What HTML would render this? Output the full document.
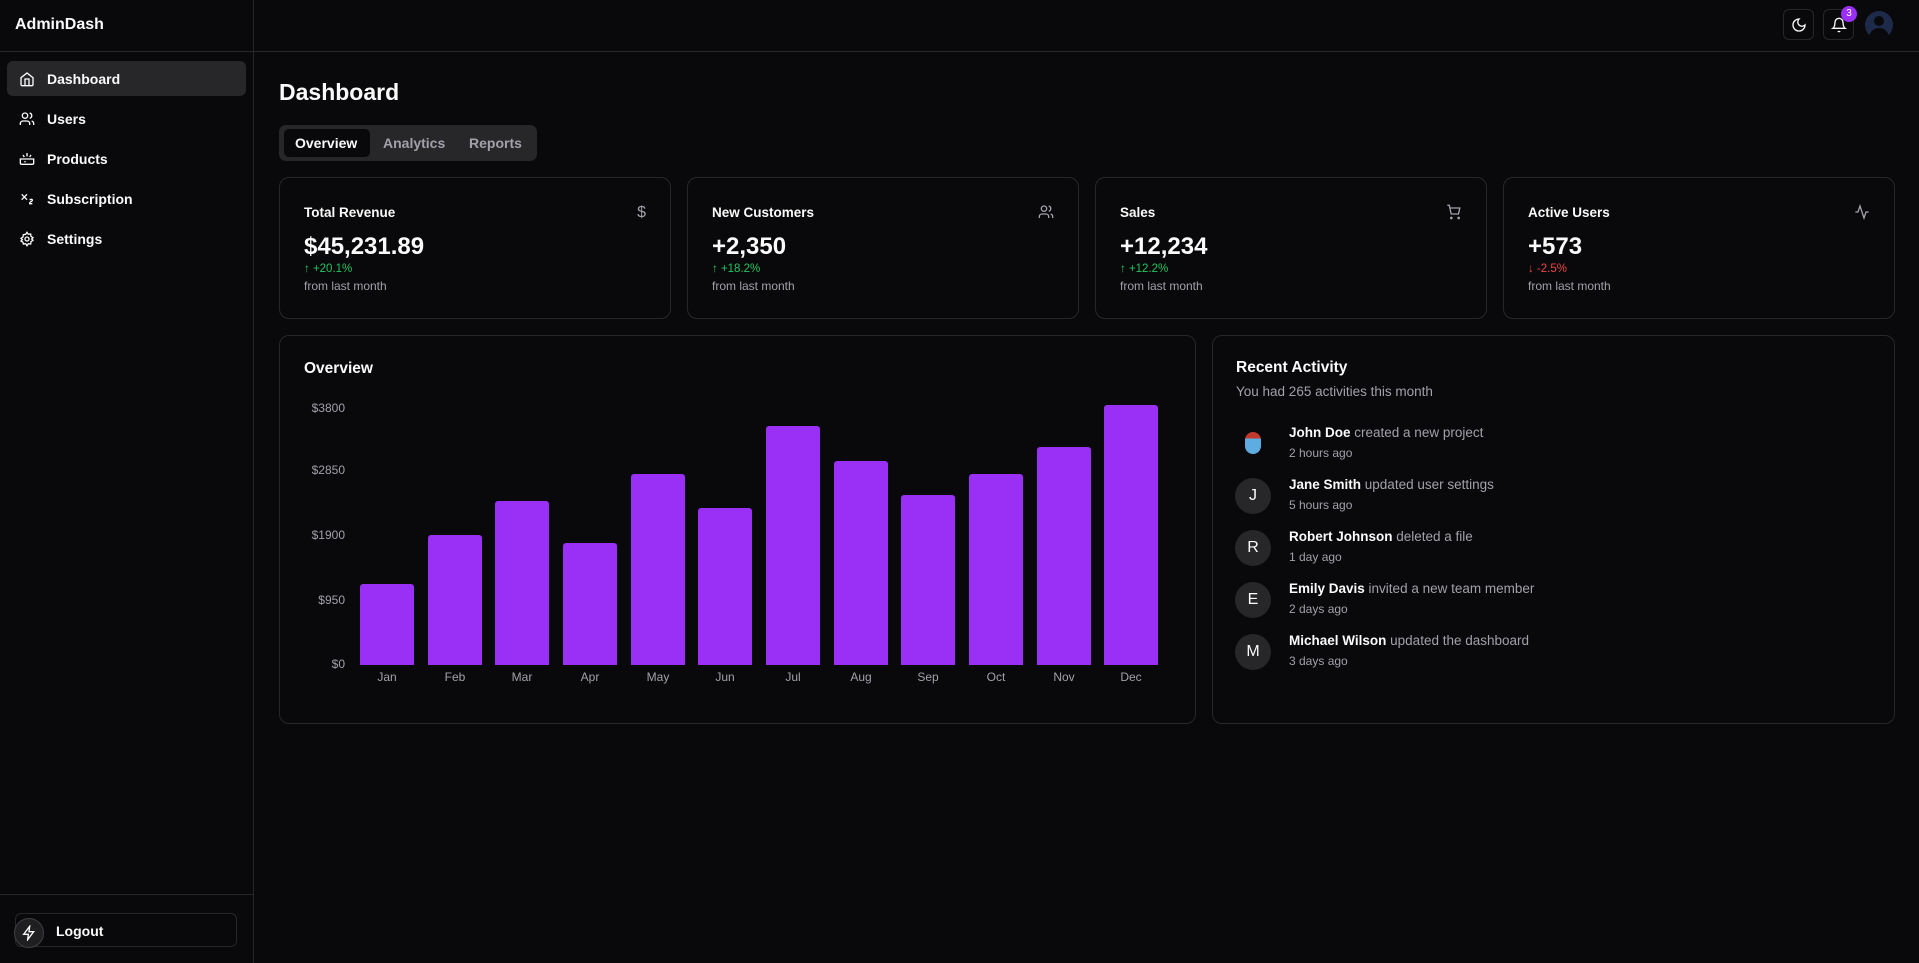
<!DOCTYPE html>
<html><head><meta charset="utf-8"><style>
*{box-sizing:border-box;margin:0;padding:0}
body{width:1919px;height:963px;background:#09090b;color:#fafafa;font-family:"Liberation Sans",sans-serif;position:relative;overflow:hidden}
.abs{position:absolute}
.side{left:0;top:0;width:254px;height:963px;border-right:1px solid #27272a}
.hdr{left:254px;top:0;right:0;height:52px;border-bottom:1px solid #27272a}
.sideh{left:0;top:51px;width:254px;height:1px;background:#27272a}
.nav{position:absolute;left:7px;width:239px;height:35px;border-radius:6px;font-size:14px;font-weight:bold;display:flex;align-items:center;padding-left:40px}
.nav svg{position:absolute;left:12px;top:10px}
.card{position:absolute;border:1px solid #27272a;border-radius:10px;background:#09090b}
.ct{position:absolute;left:24px;top:27px;font-size:13.5px;font-weight:bold}
.cv{position:absolute;left:24px;top:55px;font-size:24px;font-weight:bold}
.cc{position:absolute;left:24px;top:85px;font-size:11.5px}
.cf{position:absolute;left:24px;top:101px;font-size:12px;color:#a1a1aa}
.ci{position:absolute;right:24px;top:26px}
.bar{position:absolute;width:54px;background:#9a2ff5;border-radius:3px 3px 0 0;bottom:298px}
.yl{position:absolute;right:1574px;font-size:12px;color:#a1a1aa;text-align:right}
.ml{position:absolute;top:670px;width:54px;text-align:center;font-size:12px;color:#a1a1aa}
.av{position:absolute;left:1235px;width:36px;height:36px;border-radius:50%;background:#27272a;display:flex;align-items:center;justify-content:center;font-size:16px}
.at{position:absolute;left:1289px;font-size:13.5px;color:#a1a1aa}
.at b{color:#fafafa}
.as{position:absolute;left:1289px;font-size:12px;color:#a1a1aa}
</style></head><body>
<div class="abs side"></div>
<div class="abs hdr"></div>
<div class="abs sideh"></div>
<div class="abs" style="left:15px;top:16px;font-size:16px;font-weight:bold">AdminDash</div>
<div class="nav" style="top:61px;background:#27272a"><svg width="16" height="16" viewBox="0 0 24 24" fill="none" stroke="#fafafa" stroke-width="2"><path d="M3 10l9-7 9 7v10a2 2 0 0 1-2 2H5a2 2 0 0 1-2-2z"/><path d="M9 22V12h6v10"/></svg>Dashboard</div>
<div class="nav" style="top:101px"><svg width="16" height="16" viewBox="0 0 24 24" fill="none" stroke="#fafafa" stroke-width="2"><circle cx="9" cy="7" r="4"/><path d="M2 21v-2a4 4 0 0 1 4-4h6a4 4 0 0 1 4 4v2M16 3.1a4 4 0 0 1 0 7.8M22 21v-2a4 4 0 0 0-3-3.9"/></svg>Users</div>
<div class="nav" style="top:141px"><svg width="16" height="16" viewBox="0 0 24 24" fill="none" stroke="#fafafa" stroke-width="2"><path d="M2 12h20v6a2 2 0 0 1-2 2H4a2 2 0 0 1-2-2zM8 16h2M12 8V3M8 9l-2-3M16 9l2-3"/></svg>Products</div>
<div class="nav" style="top:181px"><svg width="16" height="16" viewBox="0 0 24 24" fill="none" stroke="#fafafa" stroke-width="2"><path d="M4 5l8 8M12 5l-8 8M20 19h-4c0-1.5.4-2 1.5-2.7 1-.6 2.5-1.1 2.5-2.3 0-.8-.7-1.5-1.7-1.5-.9 0-1.8.5-2.1 1.3"/></svg>Subscription</div>
<div class="nav" style="top:221px"><svg width="16" height="16" viewBox="0 0 24 24" fill="none" stroke="#fafafa" stroke-width="2"><circle cx="12" cy="12" r="3"/><path d="M12 2l2 3 3.5-.5.5 3.5 3 2-2 2 2 2-3 2-.5 3.5-3.5-.5-2 3-2-3-3.5.5L6 17l-3-2 2-2-2-2 3-2 .5-3.5L10 5z"/></svg>Settings</div>
<div class="abs" style="left:0;top:894px;width:254px;height:1px;background:#27272a"></div>
<div class="abs" style="left:15px;top:913px;width:222px;height:34px;border:1px solid #27272a;border-radius:6px;font-size:14px;font-weight:bold;padding:9px 0 0 40px">Logout</div>
<div class="abs" style="left:14px;top:918px;width:30px;height:30px;border-radius:50%;background:#1f1f22;border:1px solid #3f3f46"><svg style="position:absolute;left:6px;top:6px" width="16" height="16" viewBox="0 0 24 24" fill="none" stroke="#fafafa" stroke-width="2"><path d="M13 2L4 14h7l-1 8 9-12h-7z"/></svg></div>
<div class="abs" style="left:1783px;top:9px;width:31px;height:31px;border:1px solid #27272a;border-radius:6px"><svg style="position:absolute;left:7px;top:7px" width="16" height="16" viewBox="0 0 24 24" fill="none" stroke="#fafafa" stroke-width="2"><path d="M12 3a6 6 0 0 0 9 9 9 9 0 1 1-9-9z"/></svg></div>
<div class="abs" style="left:1823px;top:9px;width:31px;height:31px;border:1px solid #27272a;border-radius:6px"><svg style="position:absolute;left:7px;top:7px" width="16" height="16" viewBox="0 0 24 24" fill="none" stroke="#fafafa" stroke-width="2"><path d="M6 8a6 6 0 0 1 12 0c0 7 3 9 3 9H3s3-2 3-9M10.3 21a1.9 1.9 0 0 0 3.4 0"/></svg></div>
<div class="abs" style="left:1841px;top:6px;width:16px;height:16px;border-radius:50%;background:#9a2ff5;font-size:10px;text-align:center;line-height:16px">3</div>
<div class="abs" style="left:1865px;top:11px;width:28px;height:28px;border-radius:50%;background:#1e2a4a;overflow:hidden"><div class="abs" style="left:9px;top:5px;width:10px;height:10px;border-radius:50%;background:#09090b"></div><div class="abs" style="left:4px;top:17px;width:20px;height:14px;border-radius:10px 10px 0 0;background:#09090b"></div></div>
<div class="abs" style="left:279px;top:79px;font-size:23px;font-weight:bold">Dashboard</div>
<div class="abs" style="left:279px;top:125px;width:258px;height:36px;background:#27272a;border-radius:7px"></div>
<div class="abs" style="left:284px;top:129px;width:86px;height:28px;background:#09090b;border-radius:5px"></div>
<div class="abs" style="left:295px;top:135px;font-size:14px;font-weight:bold">Overview</div>
<div class="abs" style="left:383px;top:135px;font-size:14px;font-weight:bold;color:#a1a1aa">Analytics</div>
<div class="abs" style="left:469px;top:135px;font-size:14px;font-weight:bold;color:#a1a1aa">Reports</div>
<div class="card" style="left:279px;top:177px;width:392px;height:142px"><div class="ct">Total Revenue</div><div class="ci" style="color:#a1a1aa;font-size:16px">$</div><div class="cv">$45,231.89</div><div class="cc" style="color:#22c55e">↑ +20.1%</div><div class="cf">from last month</div></div>
<div class="card" style="left:687px;top:177px;width:392px;height:142px"><div class="ct">New Customers</div><svg class="ci" width="16" height="16" viewBox="0 0 24 24" fill="none" stroke="#a1a1aa" stroke-width="2"><circle cx="9" cy="7" r="4"/><path d="M2 21v-2a4 4 0 0 1 4-4h6a4 4 0 0 1 4 4v2M16 3.1a4 4 0 0 1 0 7.8M22 21v-2a4 4 0 0 0-3-3.9"/></svg><div class="cv">+2,350</div><div class="cc" style="color:#22c55e">↑ +18.2%</div><div class="cf">from last month</div></div>
<div class="card" style="left:1095px;top:177px;width:392px;height:142px"><div class="ct">Sales</div><svg class="ci" width="16" height="16" viewBox="0 0 24 24" fill="none" stroke="#a1a1aa" stroke-width="2"><circle cx="8" cy="21" r="1"/><circle cx="19" cy="21" r="1"/><path d="M2 2h3l2.7 13h11l2-9H6"/></svg><div class="cv">+12,234</div><div class="cc" style="color:#22c55e">↑ +12.2%</div><div class="cf">from last month</div></div>
<div class="card" style="left:1503px;top:177px;width:392px;height:142px"><div class="ct">Active Users</div><svg class="ci" width="16" height="16" viewBox="0 0 24 24" fill="none" stroke="#a1a1aa" stroke-width="2"><path d="M22 12h-4l-3 9L9 3l-3 9H2"/></svg><div class="cv">+573</div><div class="cc" style="color:#ef4444">↓ -2.5%</div><div class="cf">from last month</div></div>
<div class="card" style="left:279px;top:335px;width:917px;height:389px"></div>
<div class="abs" style="left:304px;top:360px;font-size:15.5px;font-weight:bold">Overview</div>
<div class="yl" style="top:401px">$3800</div>
<div class="yl" style="top:463px">$2850</div>
<div class="yl" style="top:528px">$1900</div>
<div class="yl" style="top:593px">$950</div>
<div class="yl" style="top:657px">$0</div>
<div class="bar" style="left:360px;height:81px"></div>
<div class="bar" style="left:428px;height:130px"></div>
<div class="bar" style="left:495px;height:164px"></div>
<div class="bar" style="left:563px;height:122px"></div>
<div class="bar" style="left:631px;height:191px"></div>
<div class="bar" style="left:698px;height:157px"></div>
<div class="bar" style="left:766px;height:239px"></div>
<div class="bar" style="left:834px;height:204px"></div>
<div class="bar" style="left:901px;height:170px"></div>
<div class="bar" style="left:969px;height:191px"></div>
<div class="bar" style="left:1037px;height:218px"></div>
<div class="bar" style="left:1104px;height:260px"></div>
<div class="ml" style="left:360px">Jan</div><div class="ml" style="left:428px">Feb</div><div class="ml" style="left:495px">Mar</div><div class="ml" style="left:563px">Apr</div><div class="ml" style="left:631px">May</div><div class="ml" style="left:698px">Jun</div><div class="ml" style="left:766px">Jul</div><div class="ml" style="left:834px">Aug</div><div class="ml" style="left:901px">Sep</div><div class="ml" style="left:969px">Oct</div><div class="ml" style="left:1037px">Nov</div><div class="ml" style="left:1104px">Dec</div>
<div class="card" style="left:1212px;top:335px;width:683px;height:389px"></div>
<div class="abs" style="left:1236px;top:359px;font-size:15.5px;font-weight:bold">Recent Activity</div>
<div class="abs" style="left:1236px;top:384px;font-size:13.5px;color:#a1a1aa">You had 265 activities this month</div>
<div class="abs" style="left:1245px;top:432px;width:16px;height:22px;border-radius:8px;background:linear-gradient(#c0392b 30%,#5dade2 30%)"></div>
<div class="at" style="top:425px"><b>John Doe</b> created a new project</div><div class="as" style="top:446px">2 hours ago</div>
<div class="av" style="top:478px">J</div><div class="at" style="top:477px"><b>Jane Smith</b> updated user settings</div><div class="as" style="top:498px">5 hours ago</div>
<div class="av" style="top:530px">R</div><div class="at" style="top:529px"><b>Robert Johnson</b> deleted a file</div><div class="as" style="top:550px">1 day ago</div>
<div class="av" style="top:582px">E</div><div class="at" style="top:581px"><b>Emily Davis</b> invited a new team member</div><div class="as" style="top:602px">2 days ago</div>
<div class="av" style="top:634px">M</div><div class="at" style="top:633px"><b>Michael Wilson</b> updated the dashboard</div><div class="as" style="top:654px">3 days ago</div>
</body></html>
